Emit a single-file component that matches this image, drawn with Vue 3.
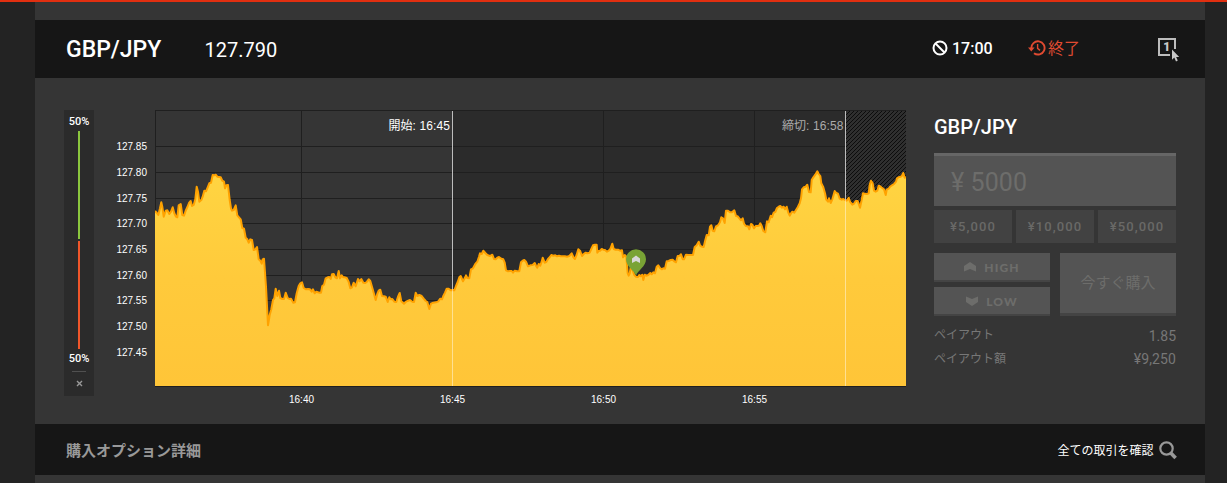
<script setup>
import { ref, computed } from 'vue'

const pair = ref('GBP/JPY')
const rate = ref('127.790')
const amount = ref('5000')
const presets = ['¥5,000', '¥10,000', '¥50,000']

const yTicks = [
  { label: '127.85', y: 36 },
  { label: '127.80', y: 62 },
  { label: '127.75', y: 88 },
  { label: '127.70', y: 113 },
  { label: '127.65', y: 139 },
  { label: '127.60', y: 165 },
  { label: '127.55', y: 190 },
  { label: '127.50', y: 216 },
  { label: '127.45', y: 242 }
]

const xTicks = [
  { label: '16:40', x: 146 },
  { label: '16:45', x: 297 },
  { label: '16:50', x: 448 },
  { label: '16:55', x: 599 }
]

// samples are stored in thirds of a pixel, one block per time range
const blocks = [
  {
    start: -5,
    data: '15,333 20,338 25,345 30,325 34,307 37,320 41,350 47,332 52,331 58,342 63,335 68,322 73,340 78,350 82,352 86,316 92,312 97,345 102,347 107,332 112,322 117,309 122,303 126,318 131,315 136,298 140,260 144,275 148,305 154,300 158,290 163,272 168,274 173,262 178,250 183,248 188,225 193,226 197,224 202,230 207,231 212,232 217,242 222,245 225,265 229,256 234,255 239,300 243,325 246,332 251,330 257,316 262,346 267,352 272,358 277,384 282,386 287,413 292,418 296,428 301,418 306,420 311,450 316,448 321,441 326,478 331,482 335,491 338,478 342,476 348,560 354,676 359,645 364,628 369,600 373,595 377,566 382,588 387,572 391,594 397,597 402,597 407,578 413,594 418,597 423,596 430,608 435,607 440,580 446,558 451,550 456,547 461,564 468,568 474,567 480,568 485,575 489,568 494,580 499,575 504,577 509,578 513,578 517,558 522,554 527,535 533,532 538,531 542,537 546,523 551,522 556,532 561,535 566,513 570,535 575,526 580,532 585,532 590,534 596,546 601,565 606,562 611,548 617,559 624,537 629,544 634,537 640,548 646,549 651,545 656,538 661,543 668,568 677,600 682,582 686,572 691,569 696,588 702,589 707,590 713,606 718,592 722,598 727,597 733,605 739,606 744,590 749,579 754,604 762,611 768,605'
  },
  {
    start: 225,
    data: '90,600 97,605 102,606 107,578 112,588 118,585 124,587 131,596 137,603 142,606 148,627 153,611 160,608 168,607 175,604 181,596 186,598 190,588 195,578 200,566 206,566 212,571 218,570 223,571 228,558 233,546 238,532 242,528 249,544 254,535 258,526 262,534 268,535 273,508 279,505 286,492 292,485 297,470 300,460 305,462 310,452 316,459 322,465 330,468 337,464 342,477 347,478 352,473 357,471 364,476 370,478 374,488 378,511 384,514 390,513 395,513 399,518 404,512 411,514 418,514 423,487 428,482 433,480 438,485 444,499 451,496 458,495 464,489 468,497 472,503 476,492 481,497 485,485 488,473 494,488 499,486 504,477 509,472 514,465 520,467 526,466 531,469 537,467 542,469 548,469 555,469 561,470 568,468 575,460 580,471 585,477 590,464 595,448 600,452 606,468 611,462 617,458 622,460 629,458 634,447 639,436 645,434 650,434 652,458 657,452 661,452 665,447 670,449'
  },
  {
    start: 445,
    data: '15,450 21,455 26,452 31,447 37,431 41,447 47,449 54,449 60,452 66,451 69,472 74,465 79,470 83,520 86,527 89,520 92,502 97,508 103,525 108,530 114,531 118,525 122,529 127,524 130,540 134,524 139,527 145,525 151,519 155,523 160,517 165,520 170,500 175,496 180,504 185,508 190,505 195,506 200,484 206,483 212,480 218,479 224,485 228,487 233,468 239,467 243,463 248,478 252,478 258,464 265,465 272,465 279,465 284,441 290,436 296,425 301,438 307,440 311,441 315,424 320,405 326,406 330,380 334,376 338,392 343,394 348,379 354,376 360,367 364,352 369,355 374,369 378,332 384,332 390,337 396,337 403,331 408,348 413,349 418,355 423,361 428,355 432,371 437,378 444,379 448,388 453,372 457,374 462,385 467,378 472,378 477,377 481,370 485,378 490,393 496,397 501,364 506,367 512,347 516,352 521,338 526,336 531,324 536,320 541,318 546,323 551,320 555,328 560,320 565,338 569,347 573,340 577,335 583,338 588,330 593,322 599,310 603,295 606,268 611,262 617,260 622,254 627,276 632,277 635,240 640,232 646,224 652,214 656,222 661,228 664,250 670,262 675,280 679,299 684,305 687,295 692,309 697,298 700,288 704,273 709,279 714,281 719,296 725,299 730,297 735,300 740,302 746,293 750,305 757,314 762,311 767,303 773,303 780,323 785,300 789,280 795,281 801,282 806,280 809,254 813,242 818,250 822,272 827,275 832,272 836,257 842,260 847,264 852,268 857,285 860,269 866,266 870,260 876,256 882,252 888,245 891,235 897,231 902,230 906,227 910,219 914,233 918,232'
  }
]

const linePath = computed(() => {
  const points = blocks.flatMap(({ start, data }) =>
    data.split(' ').map((sample) => {
      const [x, y] = sample.split(',').map(Number)
      return `${(x / 3 + start).toFixed(1)} ${(y / 3 - 10).toFixed(1)}`
    })
  )
  return `M${points.join('L')}`
})

const areaPath = computed(() => `${linePath.value}L751 276L0 276Z`)
</script>

<template>
  <div class="page">
    <div class="panel">
      <header class="bar bar-top">
        <span class="pair">{{ pair }}</span>
        <span class="rate">{{ rate }}</span>
        <span class="expiry">
          <svg width="16" height="16" viewBox="0 0 16 16" fill="none" stroke="#fff" stroke-width="2">
            <circle cx="8" cy="8" r="6.5" />
            <path d="M3.5 3.5L12.5 12.5" />
          </svg>
          17:00
        </span>
        <span class="closed">
          <svg width="18" height="16" viewBox="0 0 18 16" fill="none" stroke="#df4a31" stroke-width="1.9">
            <path d="M3.4 8.5A6.6 6.6 0 1 1 6 13.2" />
            <path d="M9.6 4V8.4L12 10.4" stroke-width="1.4" />
            <path d="M0 7.4H6.6L3.3 11.4Z" fill="#df4a31" stroke="none" />
          </svg>
          終了
        </span>
        <svg class="one-click" width="22" height="25" viewBox="0 0 22 25">
          <path d="M12 17H1V1H17V11" fill="none" stroke="#bdbdbd" stroke-width="2" />
          <text x="8.8" y="13" text-anchor="middle">1</text>
          <path d="M14 11.5V21.8L16.3 19.6L18 23.4L19.8 22.6L18.1 18.9H21.2Z" fill="#c8c8c8" />
        </svg>
      </header>

      <main class="main">
        <aside class="gauge">
          <span>50%</span>
          <i class="gauge-high"></i>
          <i class="gauge-low"></i>
          <span>50%</span>
          <i class="gauge-rule"></i>
          <svg width="7" height="7" viewBox="0 0 7 7" stroke="#999" stroke-width="1.4">
            <path d="M1 1L6 6M6 1L1 6" />
          </svg>
        </aside>

        <svg class="chart" width="802" height="300" viewBox="-50 0 802 300">
          <defs>
            <linearGradient id="area" gradientUnits="userSpaceOnUse" x1="0" y1="60" x2="0" y2="276">
              <stop offset="0" stop-color="#ffd542" />
              <stop offset="0.5" stop-color="#ffca3b" />
              <stop offset="1" stop-color="#ffc538" />
            </linearGradient>
            <pattern id="hatch" width="4" height="4" patternUnits="userSpaceOnUse">
              <path d="M-1 1L1 -1M0 4L4 0M3 5L5 3" stroke="#0c0c0c" stroke-width="1" />
            </pattern>
            <clipPath id="plot">
              <rect x="0" y="0" width="751" height="276" />
            </clipPath>
          </defs>

          <rect x="298" y="0" width="453" height="276" fill="#2b2b2b" />
          <g class="grid">
            <rect x="0" y="0" width="751" height="1" />
            <rect x="0" y="0" width="1" height="276" />
            <rect v-for="tick in yTicks" :key="tick.label" x="0" :y="tick.y" width="751" height="1" />
            <rect v-for="tick in xTicks" :key="tick.label" :x="tick.x" y="0" width="1" height="276" />
            <rect x="0" y="276" width="751" height="1" />
          </g>
          <rect x="691" y="1" width="60" height="275" fill="#2f2f2f" />
          <rect x="691" y="1" width="60" height="275" fill="url(#hatch)" />

          <g clip-path="url(#plot)">
            <path :d="areaPath" fill="url(#area)" />
            <path :d="linePath" fill="none" stroke="#ffa200" stroke-width="2" stroke-linejoin="round" />
          </g>

          <rect x="297" y="1" width="1" height="178" fill="#bcbcbc" />
          <rect x="297" y="179" width="1" height="97" fill="#fff" opacity="0.45" />
          <rect x="690" y="1" width="1" height="89" fill="#bcbcbc" />
          <rect x="690" y="90" width="1" height="186" fill="#fff" opacity="0.45" />

          <text class="mark" x="295" y="20" text-anchor="end">開始: 16:45</text>
          <text class="mark mark-dim" x="688.5" y="20" text-anchor="end">締切: 16:58</text>

          <path d="M481 165.5C479 160 471 156.5 471 149.2A10 10 0 0 1 491 149.2C491 156.5 483 160 481 165.5Z" fill="#79a335" />
          <path d="M477 148.4L481 145.6L485 148.4V153L481 151L477 153Z" fill="#d8d8d8" />

          <text v-for="tick in yTicks" :key="tick.label" class="tick" x="-8" :y="tick.y + 4" text-anchor="end">
            {{ tick.label }}
          </text>
          <text v-for="tick in xTicks" :key="tick.label" class="tick" :x="tick.x + 0.5" y="293" text-anchor="middle">
            {{ tick.label }}
          </text>
        </svg>

        <section class="order">
          <h2>{{ pair }}</h2>
          <div class="amount">¥ {{ amount }}</div>
          <div class="presets">
            <div v-for="preset in presets" :key="preset" class="preset">{{ preset }}</div>
          </div>
          <div class="actions">
            <div class="action">
              <svg width="12" height="10" viewBox="0 0 12 10">
                <path d="M0 4L6 0L12 4V9.5L6 7L0 9.5Z" fill="#6d6d6b" />
              </svg>
              HIGH
            </div>
            <div class="action">
              <svg width="12" height="10" viewBox="0 0 12 10">
                <path d="M0 0.5L6 3L12 0.5V6L6 10L0 6Z" fill="#6d6d6b" />
              </svg>
              LOW
            </div>
            <div class="buy">今すぐ購入</div>
          </div>
          <div class="row"><span>ペイアウト</span><b>1.85</b></div>
          <div class="row"><span>ペイアウト額</span><b>¥9,250</b></div>
        </section>
      </main>

      <footer class="bar bar-bottom">
        <span class="details">購入オプション詳細</span>
        <span class="all">全ての取引を確認</span>
        <svg class="search" width="18" height="19" viewBox="0 0 18 19" fill="none" stroke="#999">
          <circle cx="7.5" cy="7.5" r="6.2" stroke-width="2.2" />
          <path d="M11.8 12L16.6 17" stroke-width="3.6" />
        </svg>
      </footer>
    </div>
  </div>
</template>

<style>
body {
  margin: 0;
  background: #232323;
}
</style>

<style scoped>
.page {
  box-sizing: border-box;
  height: 483px;
  padding: 0 22px 0 35px;
  border-top: 2px solid #e12f10;
  background: #232323;
  color: #fff;
  font-family: Roboto, "Noto Sans CJK JP", sans-serif;
  overflow: hidden;
}
.panel {
  box-sizing: border-box;
  height: 481px;
  padding-top: 18px;
  background: #353535;
}
.bar {
  display: flex;
  align-items: center;
  box-sizing: border-box;
  padding: 0 28px 0 31px;
  background: #161616;
  white-space: nowrap;
}
.bar-top {
  height: 58px;
}
.bar-bottom {
  height: 51px;
  padding-right: 28.5px;
}
.pair {
  width: 138.5px;
  font-size: 23px;
  font-weight: 500;
}
.rate {
  flex: 1;
  padding-top: 2px;
  font-size: 20px;
}
.expiry,
.closed {
  display: flex;
  align-items: center;
  font-size: 16px;
  line-height: 20px;
}
.expiry {
  gap: 4px;
  width: 96px;
  font-weight: 500;
}
.closed {
  gap: 2px;
  width: 130px;
  color: #df4a31;
  font-weight: 400;
}
.expiry svg,
.closed svg {
  margin-bottom: 3px;
}
.one-click {
  margin: 3px -3px 0 0;
}
.one-click text {
  fill: #c8c8c8;
  font-size: 12px;
  font-weight: 900;
}
.main {
  display: flex;
  box-sizing: border-box;
  height: 346px;
  padding: 32px 29px 0;
}
.gauge {
  display: flex;
  flex-direction: column;
  align-items: center;
  width: 30px;
  height: 286px;
  margin-right: 11px;
  background: #2b2b2b;
  font-size: 11px;
  font-weight: 500;
}
.gauge span {
  height: 17px;
  line-height: 19px;
}
.gauge span:first-child {
  padding-top: 3px;
  height: 18px;
  line-height: 17px;
}
.gauge-high,
.gauge-low {
  width: 2px;
  height: 108px;
}
.gauge-high {
  margin-bottom: 2px;
  background: #8bc63e;
}
.gauge-low {
  background: #f0562a;
}
.gauge-rule {
  width: 14px;
  height: 1px;
  margin: 5px 0 8px;
  background: #505050;
}
.chart {
  flex: none;
  margin-right: 27px;
}
.grid {
  fill: #1f1f1f;
}
.tick {
  fill: #fff;
  font-family: "Liberation Sans", Arial, sans-serif;
  font-size: 10px;
}
.mark {
  fill: #fff;
  font-family: "Liberation Sans", "Noto Sans CJK JP", sans-serif;
  font-size: 12px;
  letter-spacing: 0.1px;
}
.mark-dim {
  fill: #aaa;
}
.order {
  width: 242px;
}
.order h2 {
  height: 43px;
  margin: 0;
  font-size: 20px;
  font-weight: 500;
  line-height: 34px;
}
.amount {
  box-sizing: border-box;
  height: 53px;
  padding-left: 17px;
  border-top: 3px solid #666;
  background: #545454;
  color: #6d6d6b;
  font-size: 25px;
  letter-spacing: 0.1px;
  line-height: 54px;
}
.presets {
  display: flex;
  gap: 4px;
  margin: 4px 0 10px;
}
.preset {
  flex: 1;
  height: 33px;
  background: #424242;
  color: #696967;
  font-size: 13px;
  font-weight: 500;
  letter-spacing: 1.1px;
  line-height: 33px;
  text-align: center;
}
.actions {
  display: grid;
  grid-template-columns: 116px 116px;
  grid-template-rows: 29px 29px;
  gap: 5px 10px;
}
.action,
.buy {
  display: flex;
  align-items: center;
  justify-content: center;
  box-sizing: border-box;
  border-bottom: 2px solid #444;
  background: #545454;
  color: #6d6d6b;
}
.action {
  gap: 8px;
  padding-top: 1px;
  font-family: Lato, sans-serif;
  font-size: 12px;
  font-weight: 900;
  letter-spacing: 1.1px;
}
.buy {
  grid-area: 1 / 2 / 3 / 3;
  padding-bottom: 4px;
  border-bottom-width: 3px;
  font-size: 15px;
}
.row {
  display: flex;
  justify-content: space-between;
  height: 24px;
  color: #777;
  font-size: 12px;
  line-height: 23px;
}
.row:nth-of-type(4) {
  margin-top: 8px;
}
.row b {
  font-size: 14px;
  font-weight: 400;
  line-height: 24px;
}
.row:last-child b {
  line-height: 23px;
  letter-spacing: 0.1px;
}
.details {
  flex: 1;
  color: #999;
  font-size: 15px;
  font-weight: 700;
}
.all {
  margin-right: 5px;
  font-size: 12px;
}
.search {
  margin-top: 2px;
}
</style>
